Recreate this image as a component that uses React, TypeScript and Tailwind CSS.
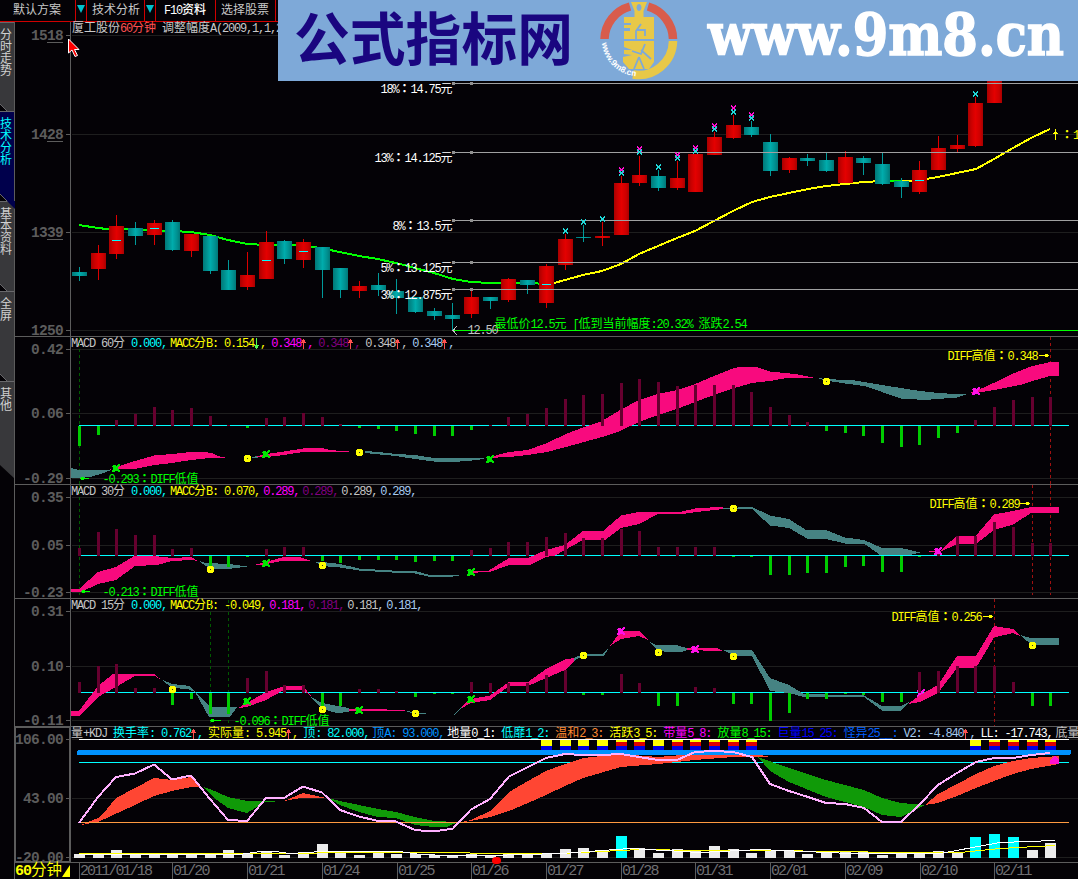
import type { ReactNode } from 'react';

type Bar = [kind: 'r' | 't', high: number, top: number, bottom: number, low: number];

const colX = (i: number) => Math.floor(79.35 + i * 18.68) + 0.5;

const FONT = "font-['Liberation_Mono','Noto_Sans_CJK_SC',monospace]";

// 60 minute bars, already in screen rows
const candles: Bar[] = [
    ['t', 267, 272, 276, 281], ['r', 245, 253, 269, 280], ['r', 215, 226, 254, 259], ['t', 222, 228, 236, 245],
    ['r', 220, 223, 235, 245], ['t', 220, 222, 250, 251], ['r', 234, 234, 251, 257], ['t', 236, 236, 271, 274],
    ['t', 260, 270, 290, 290], ['r', 252, 275, 287, 290], ['r', 231, 242, 279, 279], ['t', 240, 241, 259, 264],
    ['r', 239, 242, 260, 268], ['t', 247, 247, 270, 298], ['t', 268, 268, 290, 298], ['r', 281, 286, 291, 298],
    ['t', 273, 285, 290, 296], ['t', 279, 291, 298, 314], ['t', 297, 297, 312, 313], ['t', 308, 311, 316, 320],
    ['t', 303, 315, 319, 331], ['r', 290, 297, 314, 318], ['t', 297, 297, 301, 309], ['r', 278, 279, 300, 302],
    ['t', 280, 280, 285, 294], ['r', 264, 266, 303, 308], ['r', 234, 239, 265, 270], ['t', 225, 237, 238, 242],
    ['r', 222, 236, 238, 246], ['r', 176, 183, 235, 235], ['r', 156, 175, 183, 186], ['t', 170, 176, 188, 191],
    ['r', 161, 178, 188, 190], ['r', 154, 154, 192, 192], ['r', 132, 137, 155, 155], ['r', 115, 125, 138, 139],
    ['t', 121, 127, 135, 137], ['t', 134, 142, 171, 176], ['r', 157, 158, 170, 173], ['t', 154, 158, 161, 166],
    ['t', 153, 160, 171, 172], ['r', 151, 157, 183, 183], ['t', 156, 158, 163, 175], ['t', 153, 164, 184, 185],
    ['t', 178, 181, 187, 198], ['r', 161, 170, 192, 194], ['r', 136, 148, 170, 170], ['r', 135, 145, 149, 153],
    ['r', 97, 103, 146, 147], ['r', 60, 70, 103, 103],
];

const crossings: [number, number][] = [[2, 240], [4, 228], [10, 260], [12, 251], [25, 284], [45, 180]];

const cyanMarks: [number, number][] = [
    [26, 231], [27, 222], [28, 219], [29, 173], [30, 152], [31, 167], [32, 158], [33, 151], [34, 129], [35, 112], [36, 118], [48, 94],
];
const pinkMarks: [number, number][] = [[29, 170], [30, 149], [32, 155], [33, 148], [34, 126], [35, 108], [36, 115]];

const levels = [
    { y: 83.5, text: '18%：14.75元' },
    { y: 152.5, text: '13%：14.125元' },
    { y: 220.5, text: '8%：13.5元' },
    { y: 262.5, text: '5%：13.125元' },
    { y: 289.5, text: '3%：12.875元' },
];

const hist60 = [446, 435, 420, 414, 407, 410, 408, 416, 425, 428, 418, 417, 413, 417, 424, 428, 429, 431, 434, 436, 436, 430, 425, 417, 414, 408, 399, 395, 394, 383, 379, 382, 386, 385, 385, 385, 392, 407, 415, 422, 431, 433, 436, 443, 447, 445, 438, 433, 420, 407, 400, 397, 397];
const hist30 = [548, 532, 529, 535, 535, 549, 548, 567, 567, 557, 549, 547, 547, 561, 563, 560, 560, 560, 562, 561, 561, 550, 548, 542, 542, 537, 533, 538, 538, 529, 531, 547, 547, 547, 547, 557, 557, 575, 575, 573, 573, 567, 566, 572, 572, 557, 551, 536, 536, 522, 527, 543, 543];
const hist15 = [682, 666, 664, 688, 688, 705, 699, 714, 714, 678, 671, 685, 685, 708, 706, 689, 689, 691, 697, 694, 694, 682, 683, 683, 683, 675, 670, 695, 695, 674, 683, 706, 706, 687, 688, 704, 704, 721, 713, 699, 699, 694, 695, 702, 702, 672, 671, 666, 666, 666, 682, 706, 706];

const volume = [854, 853, 850, 855, 853, 854, 853, 853, 850, 854, 851, 855, 853, 844, 853, 855, 853, 854, 854, 855, 855, 854, 856, 854, 854, 854, 849, 848, 851, 836, 848, 853, 849, 850, 846, 849, 853, 851, 850, 854, 853, 851, 852, 855, 852, 854, 851, 852, 837, 834, 837, 850, 843];

const PINK = '#f80a7e';
const TEAL = '#468383';

// half width glyphs are squeezed to 6px, hanzi stay at 12px, the wide colon sits mid cell
function mix(text: string, svg = false) {
    return (text.match(/[\x20-\x7e]+|：|[^\x20-\x7e：]+/g) ?? []).map((run, i) => {
        const cls = /[\x20-\x7e]/.test(run)
            ? 'tracking-[-1.2px]'
            : run === '：' ? "font-['Noto_Sans_CJK_TC',sans-serif] font-bold tracking-normal" : 'tracking-normal';
        return svg
            ? <tspan key={i} lang={run === '：' ? 'zh-TW' : undefined} className={cls}>{run}</tspan>
            : <span key={i} className={cls}>{run}</span>;
    });
}

function Label({ x, y, fill, end, children }: { x: number; y: number; fill: string; end?: boolean; children: string }) {
    return (
        <text x={x} y={y + 4} fill={fill} textAnchor={end ? 'end' : 'start'} xmlSpace="preserve" className="text-[12px] whitespace-pre">
            {mix(children, true)}
        </text>
    );
}

function Arrow({ up }: { up?: boolean }) {
    return (
        <svg width="7" height="12" viewBox="0 0 7 12" shapeRendering="crispEdges" fill={up ? '#ff5050' : '#50ff50'}>
            <path d={up ? 'M2 1h1v11h-1zM1 2h3v2h-3zM0 4h5v1h-5z' : 'M2 0h1v11h-1zM1 8h3v2h-3zM0 7h5v1h-5z'} />
        </svg>
    );
}

type Field = { t: string; c: string; a?: 'up' | 'down'; tight?: boolean };

function Fields({ title, items }: { title: string; items: Field[] }) {
    return (
        <div className="ml-[56px] flex h-[13px] shrink-0 items-center pt-[2px] text-[12px] leading-[13px] whitespace-pre">
            <span className="mr-[6px] text-[#c4c4c4]">{mix(title)}</span>
            {items.map((f, i) => (
                <span key={i} className={f.tight ? 'flex shrink-0' : 'mr-[3px] flex shrink-0'} style={{ color: f.c }}>
                    <span>{mix(f.t)}</span>
                    {f.a && <Arrow up={f.a === 'up'} />}
                    {!f.tight && <span className={f.a ? '-ml-px mr-[2px]' : ''}>{mix(',')}</span>}
                </span>
            ))}
        </div>
    );
}

function Ticks({ ticks }: { ticks: [number, string][] }) {
    return (
        <>
            {ticks.map(([y, t]) => (
                <g key={t}>
                    <path d={`M66 ${y}H71`} stroke="#5c5c5c" />
                    <path d={`M72 ${y}H1078`} stroke="#1e1e1e" />
                    <text x={63 - t.length * 8} y={y + 4.5} fill="#5c5c5c" className="text-[14.5px] font-bold tracking-[-0.7px]">{t}</text>
                </g>
            ))}
        </>
    );
}

function Panel({ top, height, header, children }: { top: number; height: number; header: ReactNode; children: ReactNode }) {
    return (
        <section className="flex flex-col border-b border-[#5c5c5c]" style={{ height }}>
            {header}
            <svg
                width="1063"
                height={height - 14}
                viewBox={`15 ${top + 13} 1063 ${height - 14}`}
                shapeRendering="crispEdges"
                fill="none"
                className="shrink-0 overflow-visible"
            >
                {children}
                <path d={`M70.5 ${top}V${top + height - 1}`} stroke="#5c5c5c" />
            </svg>
        </section>
    );
}

function Histogram({ data, zero }: { data: number[]; zero: number }) {
    return (
        <>
            {data.map((v, i) => (
                <rect
                    key={i}
                    x={colX(i) - 1.5}
                    y={Math.min(v, zero)}
                    width="3"
                    height={Math.max(1, Math.abs(v - zero))}
                    fill={v > zero ? '#00cc00' : '#66002f'}
                />
            ))}
        </>
    );
}

function Dots({ at }: { at: [number, number][] }) {
    return (
        <>
            {at.map(([x, y]) => (
                <g key={x}>
                    <path d={`M${x - 2.5} ${y - 3.5}h5v1h1v5h-1v1h-5v-1h-1v-5h1z`} fill="#ffff00" />
                    <rect x={x - 0.5} y={y - 0.5} width="1" height="1" fill="#303030" />
                </g>
            ))}
        </>
    );
}

function Crosses({ at, color }: { at: [number, number][]; color: string }) {
    return (
        <>
            {at.map(([x, y]) => (
                <path key={x} d={`M${x - 3.5} ${y - 2.5}h3v1h1v-1h1v-1h2v2h-1v1h-1v2h1v1h1v2h-2v-1h-3v1h-3v-2h1v-3h-1z`} fill={color} />
            ))}
        </>
    );
}

const dash = '3 3';

function macdItems(values: string[], arrows: ('up' | 'down')[] = []): Field[] {
    const colors = ['#ffff00', '#ff00ff', '#800080', '#c4c4c4', '#a6caf0'];
    return [
        { t: '0.000', c: '#00ffff' },
        ...values.map((v, i) => ({ t: i === 0 ? `MACC分B: ${v}` : v, c: colors[i], a: arrows[i] })),
    ];
}

const kdjItems: Field[] = [
    { t: '换手率: 0.762', c: '#00ffff', a: 'up' },
    { t: '实际量: 5.945', c: '#ffff00', a: 'up' },
    { t: '顶: 82.000', c: '#00ffff' },
    { t: '顶A: 93.000', c: '#0092ff' },
    { t: '地量0_1: ', c: '#ffffff', tight: true },
    { t: '低靡1_2: ', c: '#00ffff', tight: true },
    { t: '温和2_3: ', c: '#ff8a30', tight: true },
    { t: '活跃3_5: ', c: '#ffff00', tight: true },
    { t: '带量5_8: ', c: '#ff00ff', tight: true },
    { t: '放量8_15: ', c: '#00ff00', tight: true },
    { t: '巨量15_25: ', c: '#0000ff', tight: true },
    { t: '怪异25__: ', c: '#0060ff', tight: true },
    { t: 'V2: -4.840', c: '#a6caf0', a: 'up' },
    { t: 'LL: -17.743', c: '#ffffff' },
    { t: '底量', c: '#c4c4c4', tight: true },
];

function PriceChart() {
    return (
        <>
            <defs>
                <linearGradient id="up">
                    <stop offset="0" stopColor="#a80000" />
                    <stop offset="0.25" stopColor="#cc0000" />
                    <stop offset="0.5" stopColor="#e40000" />
                    <stop offset="0.8" stopColor="#cc0000" />
                    <stop offset="1" stopColor="#a80000" />
                </linearGradient>
                <linearGradient id="down">
                    <stop offset="0" stopColor="#007878" />
                    <stop offset="0.25" stopColor="#009090" />
                    <stop offset="0.5" stopColor="#00acac" />
                    <stop offset="0.8" stopColor="#009090" />
                    <stop offset="1" stopColor="#007878" />
                </linearGradient>
            </defs>
            <Ticks ticks={[[35.5, '1518'], [134.5, '1428'], [232.5, '1339'], [330.5, '1250']]} />
            <path d="M47 42.5h16M47 141.5h16M47 239.5h16" stroke="#5c5c5c" />

            <g strokeWidth="2">
                <path d="M79 225L98 228L107 229H125L172 231L191 232L210 235L228 240L247 244L266 245H303L330 250L359 256L378 259L400 264L415 268L434 273L453 279L471 282L490 283H528L548 284" stroke="#00ff00" />
                <path d="M554 283L565 280L583 275L602 271L621 264L639 254L658 246L677 238L695 231L714 221L733 211L752 202L770 197L789 193L808 189L826 186L845 184L864 182L882 181H910L920 180L938 177L957 173L976 169L994 159L1013 148L1031 138L1050 129" stroke="#ffff00" />
                <path d="M889 181H902" stroke="#00ff00" />
            </g>

            {candles.map(([kind, high, top, bottom, low], i) => (
                <g key={i}>
                    <path d={`M${colX(i)} ${high}V${low}`} stroke={kind === 'r' ? '#dc0000' : '#009a9a'} />
                    <rect x={colX(i) - 7.5} y={top} width="15" height={bottom - top} fill={kind === 'r' ? 'url(#up)' : 'url(#down)'} />
                </g>
            ))}
            {crossings.map(([i, y]) => <path key={i} d={`M${colX(i) - 4.5} ${y + 0.5}h9`} stroke="#00ffff" />)}

            {levels.map(({ y, text }) => (
                <g key={text}>
                    <path d={`M453 ${y}H1078`} stroke="#a0a0a0" />
                    <path d={`M452 ${y}h3M470 ${y}h3`} stroke="#909090" strokeWidth="3" />
                    <Label x={452.5} y={y + 5.5} fill="#ffffff" end>{text}</Label>
                </g>
            ))}

            {pinkMarks.map(([i, y]) => <path key={i} d={`M${colX(i) - 2.5} ${y - 2.5}l5 5m0 -5l-5 5`} stroke="#ff10d0" />)}
            {cyanMarks.map(([i, y]) => <path key={i} d={`M${colX(i) - 2.5} ${y - 2.5}l5 5m0 -5l-5 5`} stroke="#20d8d8" />)}

            <path d="M453 330.5H1078" stroke="#00ff00" />
            <path d="M457 326L453 330.5L457 335" stroke="#c4c4c4" />
            <Label x={467.5} y={330} fill="#c4c4c4">12.50</Label>
            <Label x={494.5} y={324} fill="#00ff00">最低价12.5元 [低到当前幅度:20.32% 涨跌2.54</Label>
            <path d="M1055.5 129V140M1053 133.5h5M1054 132.5h3" stroke="#ffff00" />
            <Label x={1061} y={135} fill="#ffff00">：1</Label>
        </>
    );
}

function Macd60() {
    return (
        <>
            <Ticks ticks={[[349.5, '0.42'], [413.5, '0.06'], [478.5, '-0.29']]} />
            <path d="M79.5 337V484" stroke="#005a00" strokeDasharray={dash} />
            <path d="M1050.5 337V484" stroke="#a01010" strokeDasharray={dash} />
            <path d="M79 425.5H1069" stroke="#00ffff" />
            <path fill={TEAL} d="M71 468L79 470H107L111 470L104 473L90 477L79 478H71zM365 451L378 452L396 454L415 455L434 458H486L478 460L460 461.5H434L415 459L396 456L365 453zM817 378L826 379L855 380.5L864 382L882 385L901 388L920 391L938 393L966 394.5L957 397.5L925 400L901 398.5L882 392L864 386L845 383.5L826 380.5zM251 458L256 456L258 457.5z" />
            <path fill={PINK} d="M107 471L116 467L135 461L154 455.5L172 454L191 452H204L212 453L218 456L225 457.5L210 458L191 460L172 463L154 465L135 469H112zM255 457L266 454L284 451.5L303 448.5L322 448L330 450L349 451.5V452L322 452.5L303 452L284 455L266 457zM486 458L490 457L509 452L528 450L547 443L566 434L584 427L602 421L620 410L639 400L658 394L677 390L695 384L714 376L733 368.5L739 367H757L770 371.5L795 374L813 377.5H789L770 381L752 383L733 388.5L714 395L695 402L677 409L658 415L639 422L620 431L602 437L584 442L566 447L547 452L528 455L509 457zM970 393L985 387L1000 380L1013 373.5L1031 366.5L1050 362H1059V376H1050L1031 381.5L1020 385L1000 389L976 393z" />
            <Histogram data={hist60} zero={426} />
            <Crosses color="#00e800" at={[[116.5, 467.5], [266.5, 453.5], [490.5, 458.5]]} />
            <Crosses color="#ff10e8" at={[[976.5, 390.5]]} />
            <Dots at={[[247.5, 458.5], [359.5, 452.5], [826.5, 381.5]]} />
            <path d="M80 478.5h9M81 477.5h3M81 479.5h3" stroke="#00ff00" />
            <Label x={102.5} y={479} fill="#00ff00">-0.293：DIFF低值</Label>
            <Label x={947.5} y={356} fill="#ffff00">DIFF高值：0.348</Label>
            <path d="M1039 355.5h10M1045 354.5h3M1045 356.5h3" stroke="#ffff00" />
        </>
    );
}

function Macd30() {
    return (
        <>
            <Ticks ticks={[[497.5, '0.35'], [545.5, '0.05'], [592.5, '-0.23']]} />
            <path d="M79.5 485V595" stroke="#005a00" strokeDasharray={dash} />
            <path d="M1032.5 485V595M1050.5 485V595" stroke="#a01010" strokeDasharray={dash} />
            <path d="M79 555.5H1069" stroke="#00ffff" />
            <path fill={TEAL} d="M199 561L206 563L229 564L247 566.5L232 568.5H212L206 566zM315 562H322L340 564L359 568.5L400 571H415L430 575L459 575.5L450 577H430L415 573.5L400 573L359 570.5L340 567.5L322 566zM723 508L752 507L770 515.5L789 519L806 530H826L845 537.5L864 540L882 548H900L910 550L920 552.5L910 555H880L864 543.5H845L826 539H808L789 528L770 525.5L752 509H723z" />
            <path fill={PINK} d="M71 589H79L98 572L116 567L135 555.5L154 556L172 558L191 557L198 561L191 560L172 561L157 565L135 566L116 580L98 584L82 591.5H71zM252 565.5L262 563L284 557L300 557L310 560.5H284L262 565zM465 573L475 571H488L509 558H528L546 550L565 545L583 531H603L621 515.5L639 512H680L697 508L723 507V509L697 512L682 514H658L639 524L621 528L605 540H583L565 550L555 555.5L546 557L530 565H509L490 572zM929 551H940L957 535.5H976L994 514.5L1013 511L1031 507H1059V513H1031L1013 524.5L994 530L976 544H957L940 552H929z" />
            <Histogram data={hist30} zero={556} />
            <Crosses color="#00e800" at={[[266.5, 562.5], [471.5, 571.5]]} />
            <Crosses color="#ff10e8" at={[[938.5, 550.5]]} />
            <Dots at={[[210.5, 569.5], [322.5, 565.5], [733.5, 508.5]]} />
            <path d="M81 591.5h9M82 590.5h3M82 592.5h3" stroke="#00ff00" />
            <Label x={102.5} y={592} fill="#00ff00">-0.213：DIFF低值</Label>
            <Label x={929.5} y={504} fill="#ffff00">DIFF高值：0.289</Label>
            <path d="M1020 503.5h10M1026 502.5h3M1026 504.5h3" stroke="#ffff00" />
        </>
    );
}

function Macd15() {
    return (
        <>
            <Ticks ticks={[[611.5, '0.31'], [666.5, '0.10'], [720.5, '-0.11']]} />
            <path d="M210.5 600V726M228.5 600V726" stroke="#005a00" strokeDasharray={dash} />
            <path d="M994.5 599V726" stroke="#a01010" strokeDasharray={dash} />
            <path d="M79 692.5H1069" stroke="#00ffff" />
            <Crosses color="#ff10e8" at={[[921, 692.5]]} />
            <path fill={TEAL} d="M161 679L172 684L190 686L210 707H237L230 717H209L195 692L188 689L172 688zM311 697L322 703L349 708V712L337 713L322 709zM405 711L415 712L430 714H415zM454 715L462 706V708zM574 658L583 654H603L610 646L604 655.5H583L574 661zM648 641L656 645H676L687 648V650L682 652H665L656 649zM723 650H752L770 678L789 685L804 694L845 695L864 695.5L882 706H901L909 702L901 710.5H882L864 697H804L789 693L770 691L752 656H735zM1020 635L1031 638H1059V644.5H1031z" />
            <path fill={PINK} d="M71 711H79L98 686L113 674H154L163 681L155 676H135L116 687L98 697L80 715.5H71zM238 708L247 703L266 692L284 686H303L311 696L303 690H284L266 700L247 707zM349 709H378L405 710.5V711.5L378 711H349zM462 706L471 699L490 695.5L509 682H528L546 669L565 659.5L574 658V661L565 670L546 678L528 686H509L490 700L471 703L462 708zM610 646L621 631H639L648 640L639 636L621 639zM687 648H717L723 651H718L687 650zM908 704L920 695L938 685L957 656H976L994 626L1013 629L1022 637L1013 633L994 637.5L976 668H957L938 693L920 702z" />
            <Histogram data={hist15} zero={693} />
            <Crosses color="#00e800" at={[[247.5, 700.5], [359.5, 709.5], [471.5, 698.5]]} />
            <Crosses color="#ff10e8" at={[[621.5, 630.5], [695.5, 648.5]]} />
            <Dots at={[[172.5, 689.5], [322.5, 709.5], [415.5, 713.5], [583.5, 655.5], [658.5, 652.5], [733.5, 656.5], [1032.5, 645.5]]} />
            <path d="M210 720.5h11M211 719.5h3M211 721.5h3" stroke="#00ff00" />
            <Label x={233.5} y={721} fill="#00ff00">-0.096：DIFF低值</Label>
            <Label x={891.5} y={617} fill="#ffff00">DIFF高值：0.256</Label>
            <path d="M983 616.5h10M989 615.5h3M989 617.5h3" stroke="#ffff00" />
        </>
    );
}

const hot = [25, 26, 27, 28, 29, 30, 31, 32, 33, 34, 35, 36, 48, 49, 50, 51, 52];
const bright = [29, 48, 49, 50];

function Kdj() {
    return (
        <>
            <Ticks ticks={[[739.5, '106.00'], [798.5, '43.00'], [857.5, '-20.00']]} />
            <path d="M15 727.5H71M15.5 727V862M69.500 727V862M15 861.5H71" stroke="#5c5c5c" />
            <path d="M79 739.5H1069" stroke="#ffffff" />
            {hot.map((i) => (
                <g key={i}>
                    <rect x={colX(i) - 5.5} y="740" width="11" height="6" fill="#ffff00" />
                    {i > 28 && i !== 31 && i !== 48 && <rect x={colX(i) - 5.5} y="742" width="11" height="4" fill="#e00000" />}
                    <rect x={colX(i) - 5.5} y="746" width="11" height="5" fill="#0000e0" />
                </g>
            ))}
            <path d="M79 762.5H1069" stroke="#00ffff" />
            <path fill="#ff4633" d="M81 825L98 818L107 809L116 798L135 788L154 778L172 780L191 777L201 787H191L172 791L154 796L135 805L98 822zM284 801L303 793L324 797.5H303zM462 822L471 820L490 811L509 792L528 781L546 771L565 764L583 758L621 754L658 757L695 754L750 753L770 757L750 757L733 757L695 760L658 764L621 767L583 778L565 786L546 795L528 803L509 811L490 817L471 821zM925 805L938 794L957 784L976 774L994 766L1013 761L1031 758L1059 756V764L1031 769L1013 774L994 781L976 788L957 796L938 803z" />
            <path fill="#109a08" d="M203 787L210 789L228 797L247 801H275V802L266 801.5L247 813L228 808L213 797zM328 798L340 801L378 809L396 812L415 817L434 821L458 822L447 827H434L415 825L396 818L378 817L359 812L340 805zM758 757L789 768L826 780L864 790L882 798L901 803L925 805L901 817L882 815L864 807L826 797L789 782L770 771z" />
            <path d="M79 822.5H1069" stroke="#ff9a40" />
            <rect x="77" y="750" width="994" height="5" rx="2" fill="#0092ff" />
            <path strokeWidth="2" stroke="#ffb0ff" d="M79 823L98 797L116 777L135 773.5L154 764.5L172 779.5L191 775.5L210 799L228 820L247 821L266 798H284L303 786.5L322 792.5L340 810L359 816.5L378 821L396 821.5L415 830L434 831.5L453 828.5L471 809.5L490 799L509 776.5L528 767L546 758L565 754L583 755L602 755L621 754L639 757L658 760H677L695 752L714 751L733 752L752 757L770 784L789 791L808 797L826 803L845 804L864 808L882 822H901L920 804L938 785L957 773L976 762L994 758H1013L1031 755L1050 753" />
            {volume.map((v, i) => (
                <rect key={i} x={colX(i) - 5.5} y={v} width="11" height={858 - v} fill={bright.includes(i) ? '#00ffff' : '#ececec'} />
            ))}
            <path stroke="#ffff00" d="M79 853.5H305L330 852.5H460L480 853.5H560L600 851.5L640 849.5L700 850.5L770 850.5L900 852.5L960 852.5L1000 848.5L1055 845.5" />
            <path stroke="#ffffff" d="M79 854.5H240L260 851.5H275L290 853.5L322 851.5H348L370 851.5H400L420 854.5L450 855.5H490L560 853.5L630 848.5L700 852.5L760 849.5L850 853.5L940 853.5L1000 842.5L1055 840.5" />
            <path fill="#ff10d0" d="M1050 764v-4l5 -5l4 5v4z" />
        </>
    );
}

function Banner() {
    return (
        <div className="absolute top-0 left-[278px] h-[81px] w-[800px] bg-[#7ea9d8]">
            <svg width="800" height="81" viewBox="278 0 800 81">
                <text x="294" y="60" fill="#1a0680" textLength="279" lengthAdjust="spacingAndGlyphs" className="font-['Noto_Sans_CJK_SC',sans-serif] text-[57px] font-bold">公式指标网</text>
                <text x="708" y="55" fill="#ffffff" stroke="#ffffff" strokeWidth="1.5" textLength="356" lengthAdjust="spacingAndGlyphs" className="font-['DejaVu_Serif',serif] text-[58px] font-bold">www.9m8.cn</text>
                <g fill="none" strokeWidth="8.5">
                    <path d="M604.500 39A34.500 34.500 0 0 1 630 6.500M648 6.500A34.500 34.500 0 0 1 673 39" stroke="#d85c4c" />
                    <path d="M673 41A34.500 34.500 0 0 1 633 74.500" stroke="#e8c848" />
                </g>
                <path fill="#e8c848" fillRule="evenodd" d="M631 2H647L643.500 11V17H654V39H624V31H630V28H624V17H634.500V11zM639 4a2.500 3.500 0 1 0 0.010 0zM624 41H654V62L649 69H629L623 62V57L632 55L624 54V50H632L624 47z" />
                <path fill="none" stroke="#7ea9d8" strokeWidth="1.800" d="M641 24L636 31V39M636 30H645V36M624 24H631M645 44L641 54L632 51M641 50L651 59M639 57L634 69M639 57L644 69" />
                <path id="ring" fill="none" d="M602 43A37 37 0 0 0 634 76" />
                <text fill="#ffffff" className="font-['Liberation_Sans',sans-serif] text-[8.5px] font-bold"><textPath href="#ring">www.9m8.cn</textPath></text>
            </svg>
        </div>
    );
}

const tabs = [
    { name: '分时走势', cls: 'h-[89px] bg-[#38383b] text-[#d0d0d0]' },
    { name: '技术分析', cls: 'h-[90px] bg-[#00004c] text-[#00ffff]', active: true },
    { name: '基本资料', cls: 'h-[90px] bg-[#38383b] text-[#d0d0d0]' },
    { name: '全屏', cls: 'h-[90px] bg-[#38383b] text-[#d0d0d0]' },
    { name: '其他', cls: 'h-[98px] bg-[#38383b] text-[#d0d0d0] [clip-path:polygon(0_0,100%_0,100%_100%,0_84px)]' },
];

function Sidebar() {
    return (
        <nav className="w-[15px] shrink-0">
            {tabs.map((t, i) => (
                <div key={t.name} className={`relative flex flex-col border-t border-r border-[#68686b] pt-[7px] text-[12px] leading-[12px] ${t.cls}`}>
                    {[...t.name].map((c) => <span key={c}>{c}</span>)}
                    {i < 4 && (
                        <svg width="8" height="8" viewBox="0 0 8 8" className="absolute bottom-0 left-0" shapeRendering="crispEdges">
                            <path d="M0 1L7 8H0z" fill="#040206" />
                            <path d="M0 1L7 8" stroke="#68686b" fill="none" />
                        </svg>
                    )}
                    {t.active && (
                        <svg width="15" height="8" viewBox="0 0 15 8" className="absolute top-full left-0 z-10">
                            <path d="M7 0H15V8z" fill="#00004c" />
                        </svg>
                    )}
                </div>
            ))}
        </nav>
    );
}

function Toolbar() {
    return (
        <header className="flex h-[22px] shrink-0 border-b border-[#d00000] text-[12px] leading-[23px] text-[#c8c8c8]">
            <span className="w-[76px] border-r border-[#d00000] pl-[13px]">默认方案</span>
            <span className="flex w-[11px] items-center justify-center border-r border-[#d00000]"><Down /></span>
            <span className="w-[58px] border-r border-[#d00000] pl-[5px]">技术分析</span>
            <span className="flex w-[11px] items-center justify-center border-r border-[#d00000]"><Down /></span>
            <span className="w-[60px] border-r border-[#d00000] pl-[8px] font-medium text-white">{mix('F10资料')}</span>
            <span className="w-[60px] border-r border-[#d00000] pl-[5px]">选择股票</span>
        </header>
    );
}

function Down() {
    return (
        <svg width="8" height="8" viewBox="0 0 8 8" className="-mt-1 shrink-0">
            <path d="M0 0H8L4 8z" fill="#00c0cc" />
        </svg>
    );
}

const dates: [string, string][] = [
    ['2011/01/18', 'w-[93px]'], ['01/20', 'w-[75px]'], ['01/21', 'w-[75px]'], ['01/24', 'w-[75px]'], ['01/25', 'w-[74px]'],
    ['01/26', 'w-[75px]'], ['01/27', 'w-[75px]'], ['01/28', 'w-[74px]'], ['01/31', 'w-[75px]'], ['02/01', 'w-[75px]'],
    ['02/09', 'w-[75px]'], ['02/10', 'w-[74px]'], ['02/11', 'w-[83px]'],
];

export default function App() {
    return (
        <div className={`relative flex h-[879px] w-[1078px] flex-col overflow-hidden bg-[#040206] ${FONT}`}>
            <Toolbar />
            <div className="flex flex-1">
                <Sidebar />
                <main className="flex w-[1063px] flex-col">
                    <Panel
                        top={22}
                        height={315}
                        header={
                            <div className="ml-[56px] flex h-[13px] shrink-0 gap-[6px] pl-px text-[12px] leading-[15px] whitespace-nowrap text-[#c8c8c8]">
                                <span>厦工股份<span className="text-[#ff5050]">{mix('60分钟')}</span></span>
                                <span>{mix('调整幅度A(2009,1,1,2')}</span>
                            </div>
                        }
                    >
                        <PriceChart />
                    </Panel>
                    <Panel top={337} height={148} header={<Fields title="MACD 60分" items={macdItems(['0.154', '0.348', '0.348', '0.348', '0.348'], ['down', 'up', 'up', 'up', 'up'])} />}>
                        <Macd60 />
                    </Panel>
                    <Panel top={485} height={114} header={<Fields title="MACD 30分" items={macdItems(['0.070', '0.289', '0.289', '0.289', '0.289'])} />}>
                        <Macd30 />
                    </Panel>
                    <Panel top={599} height={128} header={<Fields title="MACD 15分" items={macdItems(['-0.049', '0.181', '0.181', '0.181', '0.181'])} />}>
                        <Macd15 />
                    </Panel>
                    <Panel top={727} height={136} header={<Fields title="量+KDJ" items={kdjItems} />}>
                        <Kdj />
                    </Panel>
                    <footer className="flex h-[16px] text-[15px] leading-[17px]">
                        <div className="flex w-[64px] items-center text-[#ffff00]">
                            <span className="font-bold tracking-[-1px]">60</span>
                            <span className="text-[15.5px]">分钟</span>
                            <svg width="8" height="12" viewBox="0 0 8 12"><path d="M8 0V12H0z" fill="#ffff00" /></svg>
                        </div>
                        {dates.map(([d, w]) => (
                            <span key={d} className={`shrink-0 border-l border-[#5c5c5c] tracking-[-1.9px] text-[#707073] ${w}`}>{d}</span>
                        ))}
                    </footer>
                </main>
            </div>
            <div className="absolute top-[22px] left-[14px] h-[857px] w-px bg-[#5c5c5c]" />
            <div className="absolute top-[857px] left-[492px] h-[7px] w-[9px] rounded-full bg-[#ff0000]" />
            <Banner />
            <svg width="12" height="20" viewBox="0 0 12 20" className="absolute top-[38px] left-[68px]">
                <path d="M0.500 1V15L4 12L7 18.500L9.500 17.500L6.500 11.500H11z" fill="#ff0000" stroke="#ffffff" />
            </svg>
        </div>
    );
}
